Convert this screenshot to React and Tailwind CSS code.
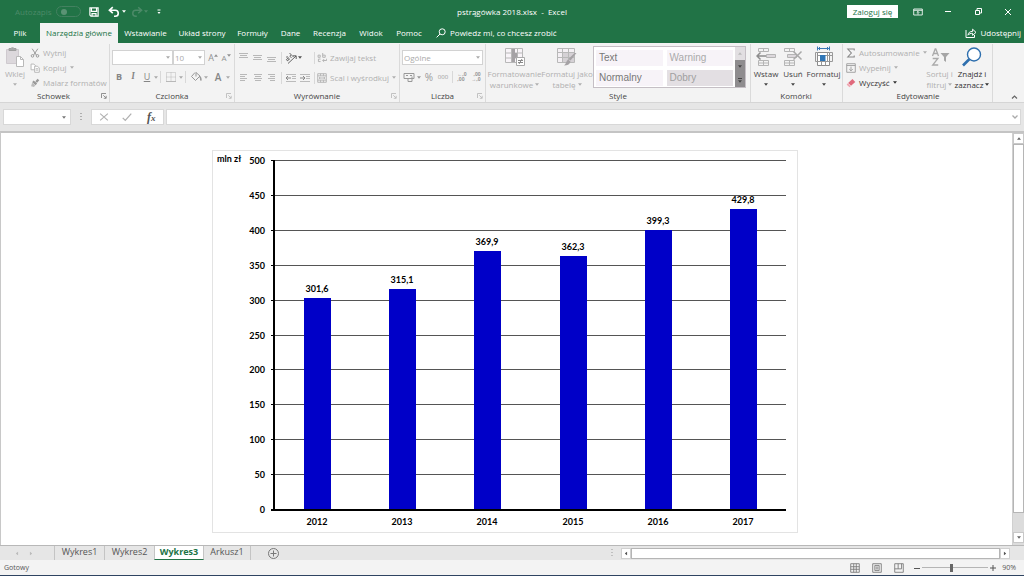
import React from "react";

const Caret = ({ className = "" }) => (
  <svg viewBox="0 0 4 3" className={"h-[3px] w-1 shrink-0 " + className} fill="currentColor" aria-hidden="true">
    <path d="M0 .3h4L2 2.7z" />
  </svg>
);

const Glyph = ({ children, box = "0 0 14 14", className = "h-3.5 w-3.5", sw = 1 }) => (
  <svg viewBox={box} className={"shrink-0 " + className} fill="none" stroke="currentColor" strokeWidth={sw} aria-hidden="true">
    {children}
  </svg>
);

const Tool = ({ label, className = "w-3.5", children }) => (
  <button type="button" aria-label={label} className={"flex h-3.5 shrink-0 items-center justify-center " + className}>
    {children}
  </button>
);

const Divider = () => <span className="mx-0.5 h-3 w-px shrink-0 bg-[#d8d8d8]" />;

const Launcher = ({ dark }) => (
  <button type="button" aria-label="Więcej opcji" className={dark ? "text-[#777]" : "text-[#b5b5b5]"}>
    <Glyph box="0 0 6 6" className="h-1.5 w-1.5" sw={0.8}>
      <path d="M.5 5V.5H5M2.3 2.3l2.6 2.6M5.2 2.8v2.5H2.8" />
    </Glyph>
  </button>
);

function Group({ title, className, launcher, children }) {
  return (
    <section aria-label={title} className={"flex shrink-0 flex-col border-r border-[#dadada] " + className}>
      <div className="flex h-[47px] pt-px">{children}</div>
      <div className="flex h-3 items-center text-[#444]">
        <span className="w-1.5" />
        <span className="flex-1 text-center text-[8px] leading-3">{title}</span>
        {launcher ? <Launcher dark={launcher === "dark"} /> : <span className="w-1.5" />}
        <span className="w-0.5" />
      </div>
    </section>
  );
}

function BigButton({ lines, icon, className, caretBelow }) {
  return (
    <button type="button" className={"flex shrink-0 flex-col items-center justify-start whitespace-nowrap text-[8px] leading-[11px] " + className}>
      <span className="flex h-[23px] items-center justify-center">{icon}</span>
      <span>{lines[0]}</span>
      {caretBelow ? (
        <Caret className="mt-1" />
      ) : (
        <span className="flex items-center gap-0.5">
          {lines[1]}
          <Caret />
        </span>
      )}
    </button>
  );
}

const RowButton = ({ icon, text, caret, className = "text-[#b0b0b0]" }) => (
  <button type="button" className={"flex h-[15px] items-center gap-[3px] whitespace-nowrap text-[8px] leading-3 " + className}>
    {icon}
    <span>{text}</span>
    {caret && <Caret />}
  </button>
);

function Picker({ label, value, className }) {
  return (
    <div className={"relative flex h-[15px] shrink-0 items-center border border-[#d2d2d2] bg-white text-[#aaa] " + className}>
      <select aria-label={label} defaultValue={value} className="h-full w-full appearance-none bg-transparent pl-px text-[8px] leading-3 outline-none">
        <option value={value}>{value}</option>
      </select>
      <Caret className="pointer-events-none absolute right-0.5" />
    </div>
  );
}

const Lines = ({ rows }) => (
  <Glyph className="h-3.5 w-3.5 text-[#b8b8b8]">
    {rows.map(([x1, x2, y]) => (
      <path key={y} d={`M${x1} ${y}H${x2}`} />
    ))}
  </Glyph>
);

function TitleBar() {
  return (
    <header className="grid h-[23px] grid-cols-[1fr_auto_1fr] items-center text-[8px] leading-3 text-white">
      <div className="flex items-center pl-[15px]">
        <label className="flex items-center gap-1 text-[#4c8a68]">
          <span>Autozapis</span>
          <input type="checkbox" className="peer sr-only" />
          <span className="flex h-[11px] w-[25px] items-center rounded-full border border-[#438160] px-1">
            <span className="h-1.5 w-1.5 rounded-full bg-[#5b9374]" />
          </span>
        </label>
        <div className="ml-1.5 flex items-center">
          <Tool label="Zapisz">
            <Glyph className="h-3 w-3" sw={1.4}>
              <path d="M2.2 2.2h9.6v9.6H3.4l-1.2-1.2zM4 2.5v3.8h6V2.5" />
              <path d="M4.7 12V8.800h4.600V12" />
            </Glyph>
          </Tool>
          <Tool label="Cofnij" className="ml-1.5 w-3.5">
            <Glyph className="h-3.5 w-3.5" sw={1.6}>
              <path d="M5.8 2.2 2.4 5.2l3.400 3M2.8 5.2h5.400a3 3 0 0 1 0 6.100H7" />
            </Glyph>
          </Tool>
          <Caret className="ml-px" />
          <Tool label="Ponów" className="ml-1 w-3.5 text-[#4c8a68]">
            <Glyph className="h-3.5 w-3.5" sw={1.5}>
              <path d="m8.2 2.200 3.400 3-3.400 3M11.200 5.200H5.800a3 3 0 0 0 0 6.100h1" />
            </Glyph>
          </Tool>
          <Caret className="text-[#4c8a68]" />
          <Tool label="Dostosuj pasek" className="ml-1 w-3.5">
            <Glyph box="0 0 6 8" className="h-2 w-1.5">
              <path d="M1.500 2h3" />
              <path d="M1.500 4h3L3 6z" fill="currentColor" stroke="none" />
            </Glyph>
          </Tool>
        </div>
      </div>
      <h1 className="whitespace-pre">pstrągówka 2018.xlsx  -  Excel</h1>
      <div className="flex items-center justify-end">
        <button type="button" className="mr-[13px] h-[13px] w-[51px] whitespace-nowrap bg-white text-[#217346]">
          Zaloguj się
        </button>
        <Tool label="Opcje wyświetlania wstążki" className="mr-4 w-3.5">
          <Glyph className="h-3 w-3">
            <path d="M2 3.500h10v7H2zM2 5h10M7 10V6.500M5.500 7.800 7 6.300l1.500 1.500" />
          </Glyph>
        </Tool>
        <Tool label="Minimalizuj" className="mr-4 w-3.5">
          <Glyph><path d="M4 6.500h6" /></Glyph>
        </Tool>
        <Tool label="Przywróć" className="mr-4 w-3.5">
          <Glyph><path d="M4.500 5.500h4v4h-4zM6 5V3.500h4.500V8H9" /></Glyph>
        </Tool>
        <Tool label="Zamknij" className="mr-[9px] w-3.5">
          <Glyph><path d="m4 4 6 6M10 4l-6 6" /></Glyph>
        </Tool>
      </div>
    </header>
  );
}

const MENU = [
  ["Plik", "w-10"],
  ["Narzędzia główne", "w-[78px]"],
  ["Wstawianie", "w-[55px]"],
  ["Układ strony", "w-[58px]"],
  ["Formuły", "w-[43px]"],
  ["Dane", "w-[33px]"],
  ["Recenzja", "w-[45px]"],
  ["Widok", "w-[38px]"],
  ["Pomoc", "w-[38px]"],
];

function MenuTabs() {
  return (
    <nav className="flex h-5 items-stretch text-[8px] leading-3 text-white">
      {MENU.map(([name, width]) => (
        <button
          key={name}
          type="button"
          className={
            "shrink-0 whitespace-nowrap text-center " +
            width +
            (name === "Narzędzia główne" ? " bg-[#f3f3f3] text-[#217346]" : "")
          }
        >
          {name}
        </button>
      ))}
      <button type="button" className="ml-2 flex items-center gap-1 whitespace-nowrap">
        <Glyph box="0 0 10 10" className="h-2.5 w-2.5">
          <circle cx="6.2" cy="3.8" r="3" />
          <path d="M4 6 .6 9.400" />
        </Glyph>
        Powiedz mi, co chcesz zrobić
      </button>
      <button type="button" className="ml-auto mr-[3px] flex items-center gap-[3px] whitespace-nowrap">
        <Glyph box="0 0 12 12" className="h-3 w-3">
          <path d="M1 3v7.500h8.500V8M3 8.200c.3-2.700 2-3.800 4.600-3.800V2.200L11 5.400 7.600 8.400V6.300C5.600 6.300 4 6.800 3 8.200" />
        </Glyph>
        Udostępnij
      </button>
    </nav>
  );
}

const pasteIcon = (
  <Glyph box="0 0 20 22" className="h-[22px] w-5">
    <path d="M1.500 3.500h12v14h-12z" fill="#dcd8dc" stroke="#cfcacf" />
    <path d="M4 4.500V2.500h2a1.800 1.800 0 0 1 3 0h2v2z" fill="#aaa" stroke="#a0a0a0" />
    <path d="M11.500 10.500h4l3 3v7h-7z" fill="#fff" stroke="#b9b9b9" />
    <path d="M15.500 10.500v3h3" stroke="#b9b9b9" />
  </Glyph>
);

const condIcon = (
  <Glyph box="0 0 22 20" className="h-5 w-[22px]">
    <path d="M1.500 1.500h17v14h-17zM7.500 1.500v14M13.500 1.500v14M1.500 6h17M1.500 11h17" stroke="#b8b8b8" fill="#f8f4f8" />
    <path d="M8 2h3v4H8zM8 6h5v5H8zM8 11h3v4H8z" fill="#a5a2a5" stroke="none" />
    <path d="M12.500 10.500h8v8h-8z" fill="#fff" stroke="#aaa" />
    <path d="M14 13.500h5M14 15.500h5M18 12l-3 5" stroke="#888" />
  </Glyph>
);

const tableIcon = (
  <Glyph box="0 0 22 20" className="h-5 w-[22px]">
    <path d="M1.500 1.500h17v14h-17z" fill="#f4f0f4" stroke="#b8b8b8" />
    <path d="M7 6h11v9H7z" fill="#d5d1d5" stroke="none" />
    <path d="M1.500 5.500h17M1.500 10.500h17M6.500 1.500v14M12.500 1.500v14" stroke="#b8b8b8" />
    <path d="m20.500 6-6 7.500-2-1.500 6-6zM12 12.500l2.500 2c-1 3-3 4-6.500 4 2-1.500 2-4 4-6z" fill="#a5a2a5" stroke="none" />
  </Glyph>
);

const insertIcon = (
  <Glyph box="0 0 20 20" className="h-5 w-5">
    <path d="M2.500 1.500h10v3h-10zM7.500 1.500v3M2.500 13.500h10v5h-10zM7.500 13.500v5M2.500 16h10" stroke="#b5b5b5" />
    <path d="M10.500 7.500h9v3h-9z" fill="#dcd8dc" stroke="#b5b5b5" />
    <path d="M10 9H1M4.500 5.500 1 9l3.500 3.500" stroke="#8d8d8d" strokeWidth="1.500" />
  </Glyph>
);

const deleteIcon = (
  <Glyph box="0 0 20 20" className="h-5 w-5">
    <path d="M1.500 1.500h10v3h-10zM6.500 1.500v3M1.500 13.500h10v5h-10zM6.500 13.500v5M1.500 16h10" stroke="#b5b5b5" />
    <path d="M4.500 7.500h9v3h-9z" fill="#dcd8dc" stroke="#b5b5b5" />
    <path d="m10.500 4.500 8 8M18.500 4.500l-8 8" stroke="#a8a8a8" strokeWidth="1.500" />
  </Glyph>
);

const formatIcon = (
  <Glyph box="0 0 20 22" className="h-[22px] w-5">
    <path d="M3.500 .5v4M15.500 .5v4M4 2.500h11M6 1 4.500 2.500 6 4M13 1l1.500 1.500L13 4" stroke="#3a78b5" />
    <path d="M3.500 6.500h12v13h-12z" fill="#fff" stroke="#8b8b8b" />
    <path d="M1.500 6.500v9h2M18.500 6.500v9h-3M1.500 6.500h2M15.500 6.500h3M3.500 9.500h15M3.500 15.500h12M7.500 15.500v4M11.500 15.500v4M13.500 6.500v9" stroke="#999" />
    <path d="M6 9h5.500v6H6z" fill="#2e75b6" stroke="none" />
  </Glyph>
);

const sortIcon = (
  <Glyph box="0 0 22 20" className="h-5 w-[22px]" sw={1.3}>
    <path d="m3.500 9 2.700-7h.6l2.700 7M4.500 6.500h4M3.700 11.500h5.200l-5.200 6.500h5.500" stroke="#aaa" />
    <path d="M11.500 6h9l-3.500 4v5l-2-1.500V10z" fill="#a5a5a5" stroke="none" />
  </Glyph>
);

const findIcon = (
  <Glyph box="0 0 22 20" className="h-5 w-[22px]">
    <path d="m8.500 12-6.500 6.500" stroke="#2e6fae" strokeWidth="2.600" />
    <circle cx="13" cy="7.500" r="6.500" fill="#fff" stroke="#2e6fae" strokeWidth="1.400" />
  </Glyph>
);

function Ribbon() {
  return (
    <div className="flex h-[60px] overflow-hidden border-b border-[#d5d5d5] bg-[#f3f3f3] pt-px text-[#a6a6a6]">
      <Group title="Schowek" className="w-[110px]" launcher="dark">
        <BigButton className="w-[30px] text-[#b0b0b0]" lines={["Wklej"]} icon={pasteIcon} caretBelow />
        <div className="flex flex-col items-start">
          <RowButton
            text="Wytnij"
            icon={<Glyph className="h-2.5 w-2.5 text-[#999]" sw={1.4}><path d="m3 1 6 9M11 1 5 10" /><circle cx="3.500" cy="11" r="1.800" /><circle cx="10.500" cy="11" r="1.800" /></Glyph>}
          />
          <RowButton
            caret
            text="Kopiuj"
            icon={<Glyph className="h-2.5 w-2.5" sw={1.2}><path d="M1.500 1.500h4l2 2v6h-6z" fill="#fff" /><path d="M6.500 4.500h4l2.500 2.500v6h-6.500zM8 8h3.500M8 10h3.500" fill="#fff" /></Glyph>}
          />
          <RowButton
            text="Malarz formatów"
            icon={<Glyph className="h-2.5 w-2.5 text-[#999]"><path d="m10.500 1 2.500 2-3 3.500-2.500-2zM5 3.500l5 4-2 2.500-5-4z" fill="currentColor" stroke="none" /><path d="m3 6.500 4.500 3.500-2 2.500-4-1z" fill="#bbb" stroke="none" /></Glyph>}
          />
        </div>
      </Group>

      <Group title="Czcionka" className="w-[125px] pl-0.5" launcher="light">
        <div className="flex flex-col gap-[5px] pt-[5px]">
          <div className="flex items-center">
            <Picker label="Czcionka" value="" className="w-[61px]" />
            <Picker label="Rozmiar czcionki" value="10" className="w-8 border-l" />
            <Tool label="Zwiększ rozmiar czcionki" className="ml-px w-3.5 text-[9px] text-[#929292]">A<Caret className="-mt-1 rotate-180" /></Tool>
            <Tool label="Zmniejsz rozmiar czcionki" className="w-3 text-[8px] text-[#929292]">A<Caret className="-mt-1" /></Tool>
          </div>
          <div className="flex items-center text-[9px] text-[#858585]">
            <Tool label="Pogrubienie"><b>B</b></Tool>
            <Tool label="Kursywa"><i className="font-serif font-bold">I</i></Tool>
            <Tool label="Podkreślenie"><u>U</u></Tool>
            <Caret className="text-[#aaa]" />
            <Divider />
            <Tool label="Obramowanie" className="w-4">
              <Glyph className="h-3.5 w-3.5 text-[#b8b8b8]"><path d="M2.500 2.500h9v9h-9zM7 2.500v9M2.500 7h9" strokeDasharray="1 1" /><path d="M2 11.500h10" /></Glyph>
            </Tool>
            <Caret className="text-[#aaa]" />
            <Divider />
            <Tool label="Kolor wypełnienia" className="w-4 text-[#999]">
              <Glyph><path d="M6 2.500 2.500 6.500l4 4L11 6 7 2.500v4" /><path d="M11 6.500c1 2 1.500 3 .5 4" strokeWidth="1.600" /></Glyph>
            </Tool>
            <Caret className="text-[#aaa]" />
            <Tool label="Kolor czcionki" className="ml-0.5 w-4"><span className="text-[10px] font-semibold">A</span></Tool>
            <Caret className="text-[#aaa]" />
          </div>
        </div>
      </Group>

      <Group title="Wyrównanie" className="w-[165px] pl-0.5" launcher="light">
        <div className="flex flex-col gap-[5px] pt-[5px]">
          <div className="flex items-center">
            <Tool label="Do góry"><Lines rows={[[2, 11, 2.5], [3, 10, 4.5], [2, 11, 6.5]]} /></Tool>
            <Tool label="Do środka"><Lines rows={[[2, 11, 4.5], [3, 10, 6.5], [2, 11, 8.5]]} /></Tool>
            <Tool label="Do dołu"><Lines rows={[[2, 11, 6.5], [3, 10, 8.5], [2, 11, 10.5]]} /></Tool>
            <Divider />
            <Tool label="Orientacja" className="w-3.5 text-[#555]">
              <Glyph sw={0.9}><path d="M4 12.500 12 5M9 4.800h3.200V8" /><path d="M2 6.500c1.500-1.500 2-.5 3.500 2M4 7.500c-1.500 0-2 1.500-1 2s2-.5 1.500-1.500M5.500 2l4 4M7 4c-1.500.5-1 2.500.5 2.500" /></Glyph>
            </Tool>
            <Caret className="text-[#555]" />
            <span className="w-2.5" />
            <Divider />
            <RowButton
              text="Zawijaj tekst"
              icon={<Glyph className="h-2.5 w-2.5" sw={1.3}><path d="M1.500 3h3v3h-3zM8 0v6h3.500V3H8M5 8.500H2V12h3M8 10.500h5.500V8M8 10.500l2-2M8 10.500l2 2" /></Glyph>}
            />
          </div>
          <div className="flex items-center">
            <Tool label="Wyrównaj do lewej"><Lines rows={[[3, 10, 3.5], [3, 8, 5.5], [3, 10, 7.5], [3, 8, 9.5]]} /></Tool>
            <Tool label="Wyśrodkuj"><Lines rows={[[3, 11, 3.5], [4, 10, 5.5], [3, 11, 7.5], [4, 10, 9.5]]} /></Tool>
            <Tool label="Wyrównaj do prawej"><Lines rows={[[3, 10, 3.5], [5, 10, 5.5], [3, 10, 7.5], [5, 10, 9.5]]} /></Tool>
            <Divider />
            <Tool label="Zmniejsz wcięcie"><Glyph><path d="M2 3.500h10M8 5.500h4M8 7.500h4M2 10.500h10" stroke="#bbb" /><path d="M7 7H2M4 5 2 7l2 2" stroke="#888" /></Glyph></Tool>
            <Tool label="Zwiększ wcięcie"><Glyph><path d="M2 3.500h10M8 5.500h4M8 7.500h4M2 10.500h10" stroke="#bbb" /><path d="M2 7h5M5 5l2 2-2 2" stroke="#888" /></Glyph></Tool>
            <Divider />
            <RowButton
              caret
              text="Scal i wyśrodkuj"
              icon={<Glyph className="h-2.5 w-2.5" sw={1.2}><path d="M1 1h12v12H1zM1 4h12M1 10h12M5 1v3M9 1v3M5 10v3M9 10v3M3 7h8M4.500 5.500 3 7l1.500 1.500M9.500 5.500 11 7 9.500 8.500" /></Glyph>}
            />
          </div>
        </div>
      </Group>

      <Group title="Liczba" className="w-[86px] pl-0.5" launcher="light">
        <div className="flex flex-col gap-[5px] pt-[5px]">
          <Picker label="Format liczb" value="Ogólne" className="w-[81px]" />
          <div className="flex items-center text-[#999]">
            <Tool label="Format walutowy">
              <Glyph><path d="M2 3.500h10v5H2zM4 5.500h2M8 5.500h2" /><path d="M6 8.500v3h4v-5" /></Glyph>
            </Tool>
            <Caret className="mx-px" />
            <Tool label="Zapis procentowy"><span className="text-[10px]">%</span></Tool>
            <Tool label="Zapis dziesiętny"><span className="text-[6px]">000</span></Tool>
            <Divider />
            <Tool label="Zwiększ dziesiętne"><span className="text-left text-[5px] font-bold leading-[5px]">←,0<br />,00</span></Tool>
            <Tool label="Zmniejsz dziesiętne"><span className="text-right text-[5px] font-bold leading-[5px]">,00<br />→,0</span></Tool>
          </div>
        </div>
      </Group>

      <Group title="Style" className="w-[265px] pl-0.5">
        <BigButton className="w-[53px] text-[#b0b0b0]" lines={["Formatowanie", "warunkowe"]} icon={condIcon} />
        <BigButton className="w-[52px] text-[#b0b0b0]" lines={["Formatuj jako", "tabelę"]} icon={tableIcon} />
        <div className="mt-px flex h-[42px] w-[153px] border border-[#c5bfc5] bg-white">
          <div className="grid flex-1 grid-cols-2 gap-1 py-[3px] pl-0.5 pr-0.5 font-['Liberation_Sans',Arial,sans-serif] text-[10px] leading-4 text-[#777]">
            <button type="button" className="bg-[#f7f3f8] pl-[3px] text-left">Text</button>
            <button type="button" className="bg-[#f7f3f8] pl-[3px] text-left text-[#aaa]">Warning</button>
            <button type="button" className="bg-[#f7f3f8] pl-[3px] text-left">Normalny</button>
            <button type="button" className="bg-[#e3dfe3] pl-[3px] text-left text-[#a0a0a0]">Dobry</button>
          </div>
          <div className="flex w-2.5 flex-col text-[#444]">
            <button type="button" aria-label="W górę" className="flex flex-1 items-center justify-center bg-[#e2dfe2] text-[#bbb]"><Caret className="rotate-180" /></button>
            <button type="button" aria-label="W dół" className="flex flex-1 items-center justify-center bg-[#8e8c8e]"><Caret /></button>
            <button type="button" aria-label="Więcej stylów" className="flex flex-1 flex-col items-center justify-center gap-px bg-[#8e8c8e]"><span className="h-px w-1 bg-[#444]" /><Caret /></button>
          </div>
        </div>
      </Group>

      <Group title="Komórki" className="w-[92px] pl-px">
        <BigButton className="w-7 text-[#444]" lines={["Wstaw"]} icon={insertIcon} caretBelow />
        <BigButton className="w-[26px] text-[#444]" lines={["Usuń"]} icon={deleteIcon} caretBelow />
        <BigButton className="w-[35px] text-[#444]" lines={["Formatuj"]} icon={formatIcon} caretBelow />
      </Group>

      <Group title="Edytowanie" className="w-[150px] pl-[3px]">
        <div className="flex w-[79px] flex-col items-start">
          <RowButton
            caret
            text="Autosumowanie"
            icon={<Glyph className="h-2.5 w-2.5 text-[#888]" sw={1.5}><path d="M11.500 3.500V1.500H2.500L7.500 7l-5 5.500h9v-2" /></Glyph>}
          />
          <RowButton
            caret
            text="Wypełnij"
            icon={<Glyph className="h-2.5 w-2.5 text-[#999]" sw={1.2}><path d="M1 1h12v12H1zM1 3.500h12M7 5v6M4.500 8.500 7 11l2.500-2.500" /></Glyph>}
          />
          <RowButton
            caret
            text="Wyczyść"
            className="text-[#333]"
            icon={<Glyph className="h-2.5 w-2.5"><path d="m9 1.500 4 4-6 5.500-4-4z" fill="#e0697c" stroke="none" /><path d="m2.500 7.500 4 4L5 13l-4-3.500z" fill="#f0a3ae" stroke="none" /></Glyph>}
          />
        </div>
        <BigButton className="w-[29px] text-[#b0b0b0]" lines={["Sortuj i", "filtruj"]} icon={sortIcon} />
        <BigButton className="w-9 text-[#333]" lines={["Znajdź i", "zaznacz"]} icon={findIcon} />
      </Group>

      <div className="flex flex-1 items-end justify-end pb-0.5 pr-1.5">
        <button type="button" aria-label="Zwiń wstążkę" className="text-[#666]">
          <Glyph box="0 0 7 6" className="h-1.5 w-[7px]" sw={1.2}><path d="m1 4.500 2.500-2.500L6 4.500" /></Glyph>
        </button>
      </div>
    </div>
  );
}

function FormulaBar() {
  return (
    <div className="flex h-7 items-center bg-[#e6e6e6] px-[3px] text-[#777]">
      <div className="flex h-4 w-[68px] items-center border border-[#d8d8d8] bg-white pr-1">
        <input aria-label="Pole nazwy" className="w-full min-w-0 bg-transparent px-1 text-[8px] outline-none" />
        <Caret />
      </div>
      <Glyph box="0 0 2 8" className="mx-[9px] h-2 w-0.5"><path d="M1 0v8" strokeDasharray="1 2" /></Glyph>
      <div className="flex h-4 w-[73px] items-center justify-around border border-[#d8d8d8] bg-white">
        <Tool label="Anuluj"><Glyph className="h-3 w-3 text-[#b0b0b0]" sw={1.3}><path d="m2.500 3 9 8M11.500 3l-9 8" /></Glyph></Tool>
        <Tool label="Wpis"><Glyph className="h-3 w-3 text-[#b0b0b0]" sw={1.5}><path d="m2 8 3 3 7-8" /></Glyph></Tool>
        <Tool label="Wstaw funkcję"><span className="font-['Liberation_Serif',serif] text-[12px] font-bold italic leading-3 text-[#555]">f<span className="text-[9px]">x</span></span></Tool>
      </div>
      <div className="ml-0.5 flex h-4 flex-1 items-center border border-[#d8d8d8] bg-white pr-0.5">
        <input aria-label="Pasek formuły" className="w-full min-w-0 bg-transparent px-1 text-[8px] outline-none" />
        <Glyph box="0 0 6 4" className="h-1 w-1.5 text-[#aaa]" sw={1.3}><path d="m.5 .5 2.500 2.500L5.500 .5" /></Glyph>
      </div>
    </div>
  );
}

const DATA = [
  ["2012", 301.6],
  ["2013", 315.1],
  ["2014", 369.9],
  ["2015", 362.3],
  ["2016", 399.3],
  ["2017", 429.8],
];
const TICKS = [0, 50, 100, 150, 200, 250, 300, 350, 400, 450, 500];
const AXIS_X = 62;
const BASE_Y = 359;
const PLOT_H = 349;
const PLOT_W = 512;
const yOf = (v) => Math.round(BASE_Y - (v / 500) * PLOT_H);

function Chart() {
  return (
    <svg
      viewBox="0 0 586 383"
      role="img"
      aria-label="Wykres kolumnowy, mln zł"
      className="h-[383px] w-[586px] shrink-0 font-[Lato,sans-serif] text-[9px] font-bold"
    >
      <rect x="0.5" y="0.5" width="585" height="382" fill="#fff" stroke="#e3e3e3" />
      {TICKS.map((t) => (
        <g key={t}>
          <rect x={AXIS_X} y={yOf(t)} width={PLOT_W} height="1" fill="#555" />
          <rect x={AXIS_X - 3} y={yOf(t)} width="4" height="1" fill="#000" />
          <text x="53" y={yOf(t) + 4} textAnchor="end">{t}</text>
        </g>
      ))}
      {DATA.map(([year, value], i) => {
        const cx = Math.round(AXIS_X + (PLOT_W / 6) * (i + 0.5));
        return (
          <g key={year}>
            <rect x={cx - 13} y={yOf(value)} width="27" height={BASE_Y - yOf(value)} fill="#0000c8" />
            <text x={cx} y={yOf(value) - 6} textAnchor="middle">{value.toFixed(1).replace(".", ",")}</text>
            <text x={cx} y="375" textAnchor="middle">{year}</text>
          </g>
        );
      })}
      <rect x={AXIS_X - 1} y="10" width="2" height="351" fill="#000" />
      <rect x={AXIS_X - 3} y={BASE_Y} width={PLOT_W + 3} height="2" fill="#000" />
      <text x="5" y="12">mln zł</text>
    </svg>
  );
}

function VerticalScroll() {
  return (
    <div className="flex w-3 shrink-0 flex-col border-l border-[#d0d0d0] bg-[#dcdcdc] text-[#666]">
      <button type="button" aria-label="Przewiń w górę" className="flex h-[11px] items-center justify-center border border-[#c8c8c8] bg-white"><Caret className="rotate-180" /></button>
      <div className="flex-1"><div className="h-[95%] border border-[#b5b5b5] bg-white" /></div>
      <button type="button" aria-label="Przewiń w dół" className="mb-0.5 flex h-[11px] items-center justify-center border border-[#c8c8c8] bg-white"><Caret /></button>
    </div>
  );
}

function SheetTabs() {
  return (
    <div className="flex h-[15px] items-stretch border-t border-[#b8b8b8] bg-[#e6e6e6] text-[9px] leading-3 text-[#555]">
      <div className="flex w-[55px] items-center justify-center gap-2.5 border-r border-[#c4c4c4] pr-1.5 text-[#bbb]">
        <button type="button" aria-label="Poprzedni arkusz"><Caret className="rotate-90" /></button>
        <button type="button" aria-label="Następny arkusz"><Caret className="-rotate-90" /></button>
      </div>
      <button type="button" className="w-[50px] border-r border-[#c4c4c4] pb-[3px]">Wykres1</button>
      <button type="button" className="w-[49px] pb-[3px]">Wykres2</button>
      <button type="button" className="w-[50px] border-x border-b border-x-[#c4c4c4] border-b-[#217346] bg-white pb-0.5 font-bold text-[#217346]">Wykres3</button>
      <button type="button" className="w-[47px] border-r border-[#c4c4c4] pb-[3px]">Arkusz1</button>
      <button type="button" aria-label="Nowy arkusz" className="ml-4 text-[#777]">
        <Glyph box="0 0 13 13" className="h-[13px] w-[13px]"><circle cx="6.500" cy="6.500" r="5" /><path d="M3.500 6.500h6M6.500 3.500v6" /></Glyph>
      </button>
      <div className="ml-auto mr-3.5 flex w-[39%] items-center">
        <Glyph box="0 0 2 8" className="mr-2 h-2 w-0.5 text-[#999]"><path d="M1 0v8" strokeDasharray="1 2" /></Glyph>
        <button type="button" aria-label="Przewiń w lewo" className="flex h-[11px] w-2.5 items-center justify-center border border-[#d0d0d0] bg-white"><Caret className="rotate-90" /></button>
        <div className="h-[11px] flex-1 border border-[#b5b5b5] bg-white" />
        <button type="button" aria-label="Przewiń w prawo" className="flex h-[11px] w-2.5 items-center justify-center border border-[#d0d0d0] bg-white"><Caret className="-rotate-90" /></button>
      </div>
    </div>
  );
}

function StatusBar() {
  return (
    <footer className="flex h-4 items-center border-b border-[#2f4461] bg-[#f3f3f3] pl-1 pr-2 text-[7px] leading-3 text-[#555]">
      <span>Gotowy</span>
      <div className="ml-auto flex items-center">
        <div className="mr-2 flex gap-2 text-[#777]">
          <Tool label="Normalny"><Glyph className="h-3 w-3"><path d="M2 2h10v10H2zM2 5.500h10M2 8.500h10M5.500 2v10M8.500 2v10" /></Glyph></Tool>
          <Tool label="Układ strony"><Glyph className="h-3 w-3"><path d="M2 2h10v10H2zM4.500 4h5v6h-5zM5.500 6h3M5.500 8h3" /></Glyph></Tool>
          <Tool label="Podgląd podziału stron"><Glyph className="h-3 w-3"><path d="M2 2h10v10H2zM2 8h8M6 2v6M10 2v6" /></Glyph></Tool>
        </div>
        <button type="button" aria-label="Pomniejsz"><Glyph box="0 0 6 6" className="h-1.5 w-1.5"><path d="M0 3.500h6" /></Glyph></button>
        <input
          type="range"
          aria-label="Powiększenie"
          min="10"
          max="190"
          defaultValue="90"
          className="mx-0.5 h-2 w-[66px] appearance-none bg-[linear-gradient(#b5b5b5,#b5b5b5)] bg-[length:100%_1px] bg-center bg-no-repeat [&::-webkit-slider-thumb]:h-2 [&::-webkit-slider-thumb]:w-[3px] [&::-webkit-slider-thumb]:appearance-none [&::-webkit-slider-thumb]:bg-[#666]"
        />
        <button type="button" aria-label="Powiększ"><Glyph box="0 0 6 6" className="h-1.5 w-1.5"><path d="M0 3h6M3 0v6" /></Glyph></button>
        <span className="ml-1.5">90%</span>
      </div>
    </footer>
  );
}

export default function App() {
  return (
    <div className="flex h-screen flex-col overflow-hidden bg-white font-['Open_Sans','Noto_Sans',sans-serif]">
      <div className="bg-[#217346]">
        <TitleBar />
        <MenuTabs />
      </div>
      <Ribbon />
      <FormulaBar />
      <main className="flex min-h-0 flex-1 border-l border-t-2 border-l-[#c8c8c8] border-t-[#c4c4c4]">
        <div className="flex min-w-0 flex-1 items-start justify-center overflow-hidden bg-white pr-1 pt-[17px]">
          <Chart />
        </div>
        <VerticalScroll />
      </main>
      <SheetTabs />
      <StatusBar />
    </div>
  );
}
